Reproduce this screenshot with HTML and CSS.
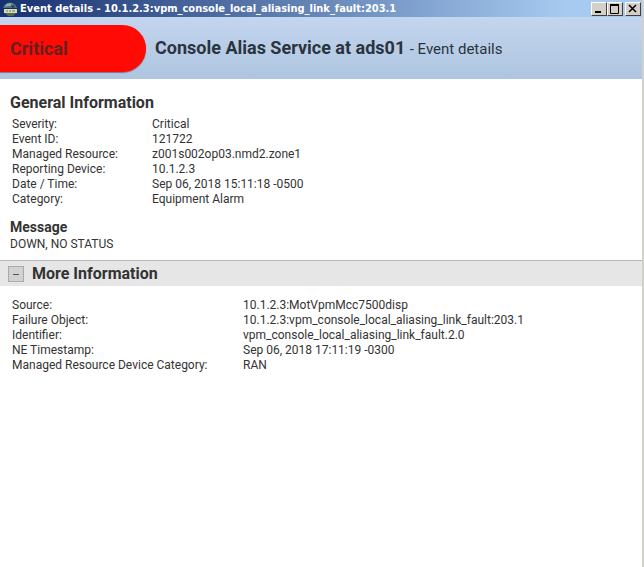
FILE: index.html
```html
<!DOCTYPE html>
<html lang="en">
<head>
    <meta charset="UTF-8">
    <meta name="viewport" content="width=device-width, initial-scale=1.0">
    <title>Event details</title>
    <link rel="stylesheet" href="styles.css">
</head>
<body>
    <div class="window">
        <div class="titlebar">
            <svg class="app-icon" width="16" height="16" viewBox="0 0 16 16" aria-hidden="true">
                <path d="M1 8a7 6.500 0 0 1 14 0z" fill="#49718f"/>
                <path d="M3 6a5 4 0 0 1 8-3L9 5 6 5z" fill="#8fb09a"/>
                <path d="M9 3l4 3-3 1z" fill="#253f58"/>
                <rect x="1" y="7" width="14" height="1" fill="#1c3040"/>
                <rect x="2" y="8" width="13" height="4" fill="#d9dcc0"/>
                <path d="M4 10h2M7 10h2M10 10h3" stroke="#6c7660"/>
                <path d="M3 12h11l-3 3H6z" fill="#526b49"/>
            </svg>
            <span class="titlebar-text">Event details - 10.1.2.3:vpm_console_local_aliasing_link_fault:203.1</span>
            <div class="window-buttons">
                <button type="button" aria-label="Minimize">
                    <svg width="10" height="10" viewBox="0 0 10 10"><path d="M1 8h6" stroke="#000" stroke-width="2"/></svg>
                </button>
                <button type="button" aria-label="Maximize">
                    <svg width="10" height="10" viewBox="0 0 10 10"><path d="M.5 1v8.500h8V1" fill="none" stroke="#000"/><path d="M0 1h9" stroke="#000" stroke-width="2"/></svg>
                </button>
                <button type="button" class="close" aria-label="Close">
                    <svg width="10" height="10" viewBox="0 0 10 10"><path d="M1 1l7 7M8 1l-7 7" stroke="#000" stroke-width="1.500"/></svg>
                </button>
            </div>
        </div>

        <header class="banner">
            <div class="severity">Critical</div>
            <h1>Console Alias Service at ads01 <span>- Event details</span></h1>
        </header>

        <section class="general">
            <h2>General Information</h2>
            <table class="info">
                <tr><th scope="row">Severity:</th><td>Critical</td></tr>
                <tr><th scope="row">Event ID:</th><td>121722</td></tr>
                <tr><th scope="row">Managed Resource:</th><td>z001s002op03.nmd2.zone1</td></tr>
                <tr><th scope="row">Reporting Device:</th><td>10.1.2.3</td></tr>
                <tr><th scope="row">Date / Time:</th><td>Sep 06, 2018 15:11:18 -0500</td></tr>
                <tr><th scope="row">Category:</th><td>Equipment Alarm</td></tr>
            </table>
            <h3>Message</h3>
            <p>DOWN, NO STATUS</p>
        </section>

        <div class="more-bar">
            <button type="button" class="toggle" aria-label="Collapse More Information" aria-expanded="true" aria-controls="more">
                <svg width="8" height="8" viewBox="0 0 8 8"><path d="M1 4.500h6" stroke="#555"/></svg>
            </button>
            <h2>More Information</h2>
        </div>
        <section class="more" id="more">
            <table class="info wide">
                <tr><th scope="row">Source:</th><td>10.1.2.3:MotVpmMcc7500disp</td></tr>
                <tr><th scope="row">Failure Object:</th><td>10.1.2.3:vpm_console_local_aliasing_link_fault:203.1</td></tr>
                <tr><th scope="row">Identifier:</th><td>vpm_console_local_aliasing_link_fault.2.0</td></tr>
                <tr><th scope="row">NE Timestamp:</th><td>Sep 06, 2018 17:11:19 -0300</td></tr>
                <tr><th scope="row">Managed Resource Device Category:</th><td>RAN</td></tr>
            </table>
        </section>
    </div>
</body>
</html>
```
FILE: styles.css
```css
* {
    box-sizing: border-box;
}
body {
    margin: 0;
    font-family: Roboto, "Liberation Sans", sans-serif;
    font-size: 12px;
    line-height: 15px;
    color: #333;
    background-color: white;
}
h1, h2, h3, p {
    margin: 0;
}
.window {
    min-height: 100vh;
    border-right: 2px solid #d0d0cc;
}
.titlebar {
    display: flex;
    align-items: center;
    height: 17px;
    padding: 0 1px 0 2px;
    background: linear-gradient(to right, #16306f, #a6caf0 88%);
    color: white;
}
.app-icon {
    flex: none;
}
.titlebar-text {
    flex: 1;
    margin-left: 2px;
    font-family: "DejaVu Sans Condensed", "DejaVu Sans", sans-serif;
    font-size: 11px;
    font-weight: bold;
    white-space: nowrap;
}
.window-buttons {
    display: flex;
}
.window-buttons button {
    display: flex;
    align-items: center;
    justify-content: center;
    width: 16px;
    height: 14px;
    padding: 0;
    border: 1px solid;
    border-color: white #404040 #404040 white;
    background-color: #d4d0c8;
}
.window-buttons .close {
    margin-left: 2px;
}
.banner {
    display: flex;
    align-items: center;
    height: 62px;
    background: linear-gradient(#c4d5ee, #aec5df);
}
.severity {
    flex: none;
    width: 146px;
    height: 47px;
    padding-left: 10px;
    border-radius: 0 24px 24px 0;
    background-color: #ff0a05;
    box-shadow: 0 1px 1px #8a7080;
    color: #652020;
    font-size: 18px;
    font-weight: bold;
    line-height: 47px;
}
h1 {
    margin-left: 9px;
    font-size: 18px;
    line-height: 26px;
    color: #2a3440;
}
h1 span {
    font-size: 15px;
    font-weight: normal;
}
h2 {
    font-size: 16px;
    line-height: 20px;
}
.general {
    padding: 14px 10px 8px;
}
.info {
    margin-top: 4px;
    border-spacing: 0;
}
.info th, .info td {
    padding: 0 2px;
    text-align: left;
    font-weight: normal;
}
.info th {
    width: 140px;
}
.wide th {
    width: 231px;
}
h3 {
    margin-top: 11px;
    font-size: 14px;
    line-height: 19px;
}
.more-bar {
    display: flex;
    align-items: center;
    height: 26px;
    padding-left: 8px;
    border-top: 1px solid #b8b8b8;
    background-color: #e6e6e6;
}
.more-bar h2 {
    line-height: 22px;
}
.toggle {
    display: flex;
    align-items: center;
    justify-content: center;
    width: 16px;
    height: 16px;
    margin-right: 8px;
    padding: 0;
    border: 1px solid #aaa;
    background-color: #d2d2d2;
}
.more {
    padding: 8px 10px;
}
```
